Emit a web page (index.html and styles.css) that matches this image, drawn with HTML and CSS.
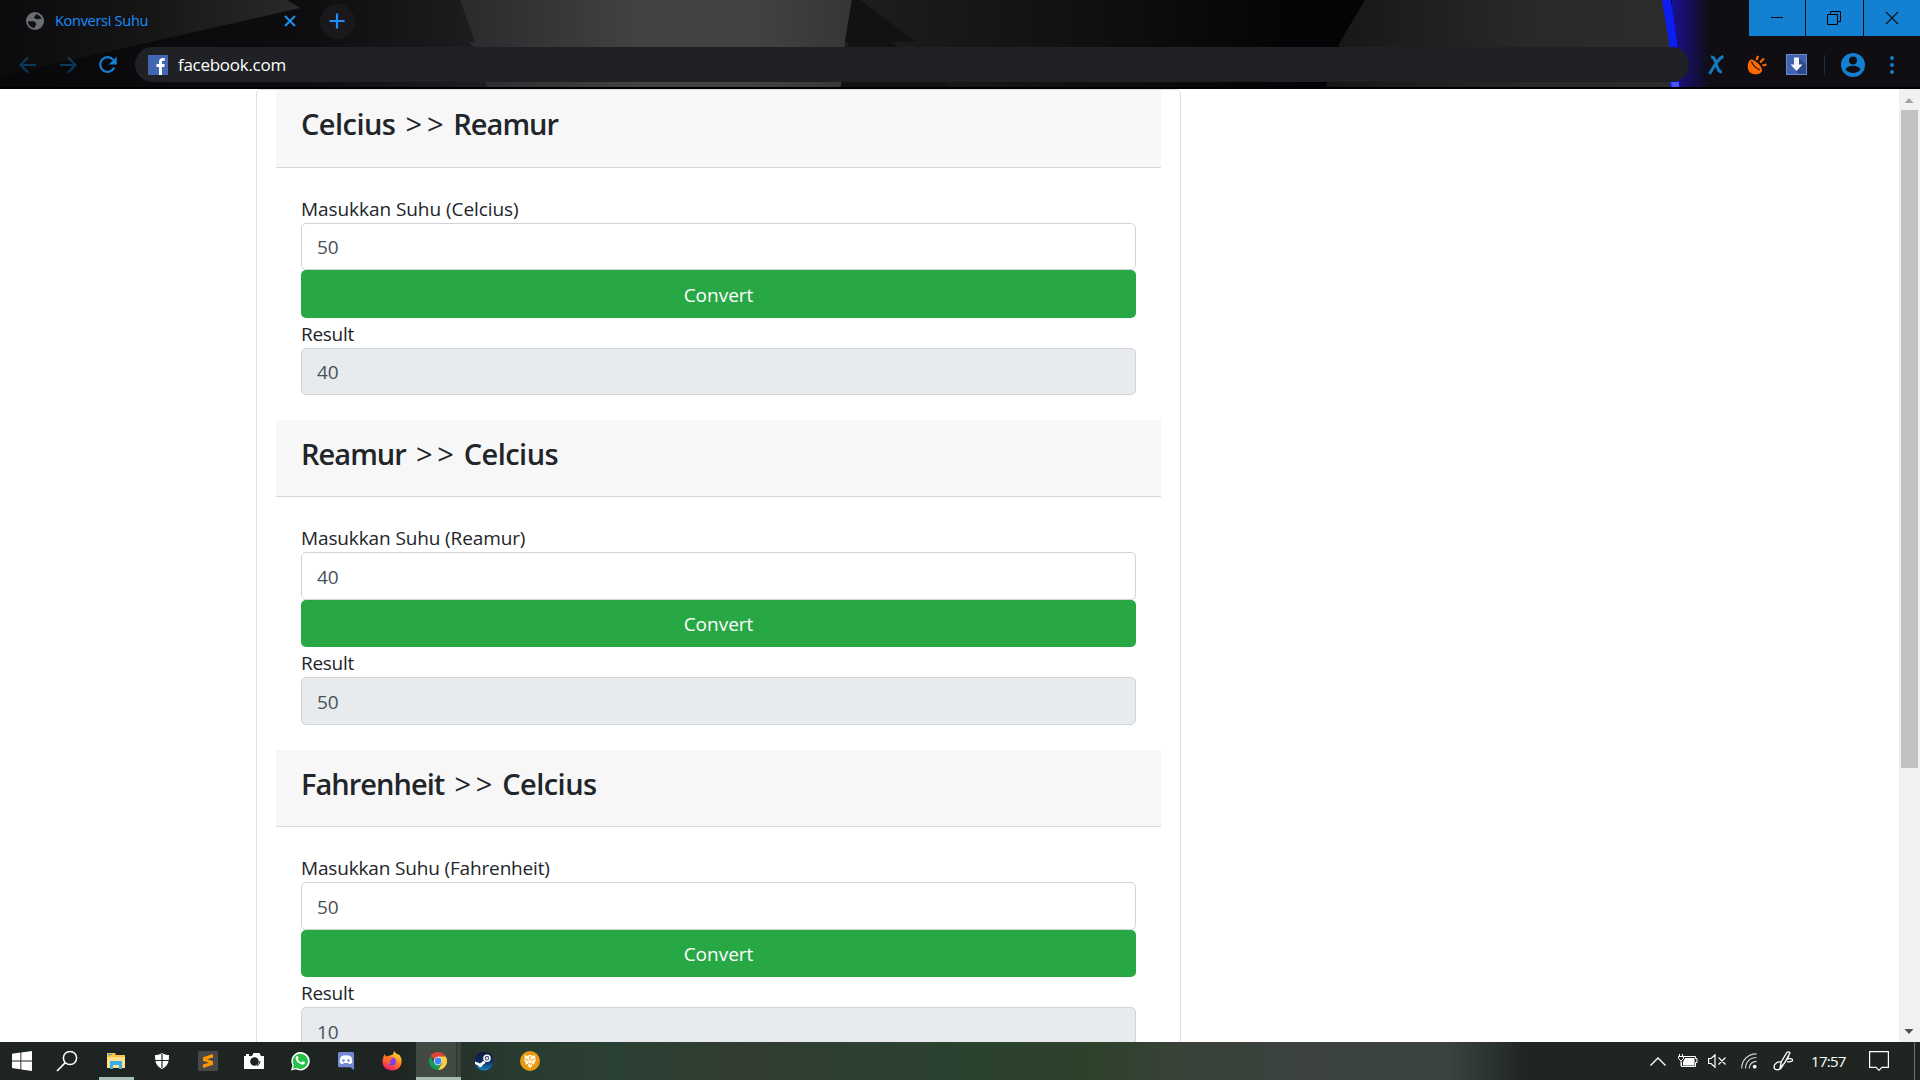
FILE: index.html
```html
<!DOCTYPE html>
<html lang="id">
<head>
<meta charset="utf-8">
<title>Konversi Suhu</title>
<link rel="stylesheet" href="styles.css">
</head>
<body>
<div class="screen">
  <header class="chrome">
    <svg class="theme" width="1920" height="87" viewBox="0 0 1920 87">
      <defs>
        <linearGradient id="g1" x1="0" x2="1"><stop offset="0" stop-color="#0b0b0d"/><stop offset=".5" stop-color="#161617"/><stop offset="1" stop-color="#2a2a2a"/></linearGradient>
        <linearGradient id="g2" x1="0" x2="1"><stop offset="0" stop-color="#2c292c"/><stop offset=".45" stop-color="#424242"/><stop offset=".75" stop-color="#424242"/><stop offset="1" stop-color="#363636"/></linearGradient>
        <linearGradient id="g3" x1="0" x2="1"><stop offset="0" stop-color="#1e1e1e"/><stop offset="1" stop-color="#040406"/></linearGradient>
        <linearGradient id="g4" x1="0" x2="1"><stop offset="0" stop-color="#161616"/><stop offset=".6" stop-color="#292929"/><stop offset="1" stop-color="#2c2c2c"/></linearGradient>
        <linearGradient id="g5" x1="0" x2="1"><stop offset="0" stop-color="#1a0f92"/><stop offset="1" stop-color="#100e12"/></linearGradient>
        <linearGradient id="g6" x1="0" x2="1"><stop offset="0" stop-color="#08080a"/><stop offset=".6" stop-color="#0d0c0f"/><stop offset="1" stop-color="#201e21"/></linearGradient>
      </defs>
      <rect width="1920" height="87" fill="#040306"/>
      <rect width="500" height="87" fill="url(#g6)"/>
      <path d="M0 0H287L300 8L0 76z" fill="url(#g1)"/>
      <path d="M460 0H852L845 42H475zM468 42H849V47H474zM485 82H842L841 87H487z" fill="url(#g2)"/>
      <path d="M852 0H1300V87H841L845 42z" fill="url(#g3)"/>
      <path d="M852 0H860L916 42H845zM849 42H892L898 47H848zM842 82H943L948 87H841z" fill="#121212"/>
      <path d="M1365 0H1663L1670 42V87H1326L1340 42z" fill="url(#g4)"/>
      <rect x="1672" width="38" height="87" fill="url(#g5)"/>
      <rect x="1710" width="210" height="87" fill="#100e12"/>
      <path d="M1662 0H1671L1677 42L1679 87H1670L1669 42z" fill="#0c1df2"/>
      <path d="M1671 82H1679V87H1672z" fill="#4455ff"/>
    </svg>
    <div class="tabs">
      <div class="tab">
        <svg width="18" height="18" viewBox="0 0 18 18"><circle cx="9" cy="9" r="9" fill="#6b6f74"/><path d="M2 9.200h5.500c1.600 0 1.500 1.600 2.600 2v2.200c-1 .3-1.400 1.200-1.400 2.600C5 15.800 2 13 2 9.200zM9.700 2.200c3 .3 5 2 6 4.500h-2.500c-1 1-2.800.8-3.800-.2-1.400.2-1.900-1-1.100-1.700.8-.8 1.400-1.400 1.400-2.600z" fill="#101114"/></svg>
        <span class="tab-title">Konversi Suhu</span>
        <svg class="tab-close" width="12" height="12" viewBox="0 0 12 12"><path d="M1 1l10 10M11 1L1 11" stroke="#1a91ea" stroke-width="2"/></svg>
      </div>
      <div class="newtab"><svg width="16" height="16" viewBox="0 0 16 16"><path d="M8 .5v15M.5 8h15" stroke="#1a91ff" stroke-width="2.200"/></svg></div>
      <div class="winbtns">
        <span class="win"><svg width="14" height="14" viewBox="0 0 14 14"><path d="M1 6.500h12" stroke="#000"/></svg></span>
        <span class="win"><svg width="14" height="14" viewBox="0 0 14 14"><path d="M.5 3.500h10v10h-10zM3.500 3.500v-3h10v10h-3" fill="none" stroke="#000"/></svg></span>
        <span class="win"><svg width="14" height="14" viewBox="0 0 14 14"><path d="M1 1l12 12M13 1L1 13" stroke="#081018" stroke-width="1.100"/></svg></span>
      </div>
    </div>
    <div class="toolbar">
      <svg class="nav" width="18" height="18" viewBox="0 0 18 18"><path d="M17 9H2M9 1.500L1.500 9 9 16.500" fill="none" stroke="#0c3a5e" stroke-width="2"/></svg>
      <svg class="nav" width="18" height="18" viewBox="0 0 18 18"><path d="M1 9h15M9 1.500L16.500 9 9 16.500" fill="none" stroke="#0c3a5e" stroke-width="2"/></svg>
      <svg class="nav" width="18" height="18" viewBox="0 0 18 18"><path d="M15.200 11.500A7.300 7.300 0 1 1 14.300 4" fill="none" stroke="#1380d2" stroke-width="2.200"/><path d="M17.700.5v8h-8z" fill="#1380d2"/></svg>
      <div class="omnibox">
        <svg width="20" height="20" viewBox="0 0 20 20"><rect width="20" height="20" fill="#4267b2"/><path d="M11 20v-8H8.500V9H11V7c0-3 1.700-4 3.800-4 1 0 1.700.1 2 .2v2.600h-1.400c-1.200 0-1.500.6-1.500 1.500V9h2.800l-.4 3h-2.400v8z" fill="#fff"/></svg>
        <span class="url">facebook.com</span>
      </div>
      <div class="exts">
        <svg width="18" height="20" viewBox="0 0 18 20"><path d="M4 2C8 1.500 8 6 9.500 10s2 7 5.500 7M16.500 1.500C11.500 3 7 11 2.500 19" fill="none" stroke="#1278b8" stroke-width="3"/></svg>
        <svg width="20" height="20" viewBox="0 0 20 20"><path d="M3.500 4.500C-1 9 0 18 6 19c5 1 8.500-.5 9-3.500z" fill="#ff6a00"/><path d="M3.500 4.500c3.500-1 12 6.500 11.500 11C11 16.500 3 9 3.500 4.500z" fill="#ff6a00"/><path d="M4.500 6.500c1 3.500 5 7.500 8.500 8.500" fill="none" stroke="#2b150a" stroke-width="1.200"/><path d="M9.500 5L11 .8M13 7.500L17 3.500M15.500 10.500l4-1" stroke="#ff6a00" stroke-width="2.200"/></svg>
        <svg width="21" height="21" viewBox="0 0 21 21"><rect x=".5" y=".5" width="20" height="20" fill="#3f63b0" stroke="#6c89c8"/><path d="M13 4l7 7v9h-7l-3-3z" fill="#2c4b8c"/><path d="M8 3.500h5v7h3.500l-6 6.500-6-6.500H8z" fill="#f3f3f3"/></svg>
        <i class="sep"></i>
        <svg width="24" height="24" viewBox="0 0 24 24"><circle cx="12" cy="12" r="12" fill="#1380d2"/><circle cx="12" cy="7.500" r="4" fill="#100e12"/><path d="M4.500 16.500c1.800-5 13.200-5 15 0-3 4.500-12 4.500-15 0z" fill="#100e12"/></svg>
        <svg class="dots" width="4" height="18" viewBox="0 0 4 18"><g fill="#1380d2"><circle cx="2" cy="2" r="1.900"/><circle cx="2" cy="9" r="1.900"/><circle cx="2" cy="16" r="1.900"/></g></svg>
      </div>
    </div>
  </header>
  <main class="viewport">
    <div class="card">
      <section class="first">
        <div class="card-header"><h4><span class="cel">Celcius</span> <span class="arrow">&gt;&gt;</span> <span class="rea">Reamur</span></h4></div>
        <div class="card-body">
          <label class="l-c">Masukkan Suhu (Celcius)</label>
          <div class="control">50</div>
          <div class="btn">Convert</div>
          <label class="l-res">Result</label>
          <div class="control readonly">40</div>
        </div>
      </section>
      <section>
        <div class="card-header"><h4><span class="rea">Reamur</span> <span class="arrow">&gt;&gt;</span> <span class="cel">Celcius</span></h4></div>
        <div class="card-body">
          <label class="l-r">Masukkan Suhu (Reamur)</label>
          <div class="control">40</div>
          <div class="btn">Convert</div>
          <label class="l-res">Result</label>
          <div class="control readonly">50</div>
        </div>
      </section>
      <section>
        <div class="card-header"><h4><span class="fah">Fahrenheit</span> <span class="arrow">&gt;&gt;</span> <span class="cel">Celcius</span></h4></div>
        <div class="card-body">
          <label class="l-f">Masukkan Suhu (Fahrenheit)</label>
          <div class="control">50</div>
          <div class="btn">Convert</div>
          <label class="l-res">Result</label>
          <div class="control readonly">10</div>
        </div>
      </section>
    </div>
    <div class="scrollbar">
      <svg width="21" height="21" viewBox="0 0 21 21"><path d="M5.500 14h9l-4.500-5z" fill="#a3a3a3"/></svg>
      <div class="thumb"></div>
      <svg class="down" width="21" height="21" viewBox="0 0 21 21"><path d="M5.500 8h9l-4.500 5z" fill="#505050"/></svg>
    </div>
  </main>
  <footer class="taskbar">
    <span class="task start"><svg width="20" height="20" viewBox="0 0 20 20"><path d="M0 2.800l8.400-1.200v7.900H0zM9.300 1.400L20 0v9.500H9.300zM0 10.400h8.400v7.900L0 17.100zM9.300 10.400H20V20L9.300 18.500z" fill="#fff"/></svg></span>
    <span class="task search"><svg width="22" height="22" viewBox="0 0 22 22"><circle cx="14" cy="8" r="6.600" fill="none" stroke="#fff" stroke-width="1.500"/><path d="M9.300 12.700L1 21" stroke="#fff" stroke-width="1.700"/></svg></span>
    <span class="task open"><svg width="18" height="16" viewBox="0 0 18 16"><path d="M0 0h8l1 2h9v13H0z" fill="#f5c542"/><path d="M0 4h18v11H0z" fill="#ffe08a"/><path d="M1 1h4v1H1z" fill="#2ba6de"/><path d="M3 16V8h12v8h-3v-4H6v4z" fill="#3aaee8"/></svg></span>
    <span class="task"><svg width="16" height="16" viewBox="0 0 16 16"><path d="M8 0c2 1.500 4.500 2 7 2 0 7-1 11-7 14C2 13 1 9 1 2c2.500 0 5-.5 7-2z" fill="#fff"/><path d="M8 1v14M1 7.500h14" stroke="#1e2421" stroke-width="1.200"/></svg></span>
    <span class="task"><svg width="20" height="20" viewBox="0 0 20 20"><rect width="20" height="20" rx="1.500" fill="#484848"/><path d="M15 3v3.500L9 8.300l6 2v3.500L5 17v-3.500l6-1.800-6-2V6.200z" fill="#ff9800"/></svg></span>
    <span class="task"><svg width="20" height="16" viewBox="0 0 20 16"><path d="M0 3h2V1h3v2h3l1.500-3h6L17 3h3v13H0z" fill="#fff"/><circle cx="10.500" cy="8.500" r="4.300" fill="#1e2421"/><path d="M13 13a5.500 5.500 0 0 0 3-5" fill="none" stroke="#1e2421"/></svg></span>
    <span class="task"><svg width="20" height="20" viewBox="0 0 20 20"><path d="M1 19.500l1.400-5A9.200 9.200 0 1 1 6 18.200z" fill="#fff"/><path d="M2.800 17.700l1-3.600a7.600 7.600 0 1 1 2.600 2.700z" fill="#25c149"/><path d="M6.500 5.200c1-.7 1.600-.2 2 1.500.3.800-1 1-.6 1.700 1 1.600 2 2.500 3.600 3 .6.200 1-1.300 1.600-1.100 1.400.6 2.100.9 1.700 2-1 2.200-4 1.300-6-.2C6.500 10.500 4.500 7.500 6.500 5.200z" fill="#fff"/></svg></span>
    <span class="task"><svg width="16" height="18" viewBox="0 0 16 18"><path d="M1.500 0h13Q16 0 16 1.500V18l-3.500-2.800H1.500Q0 15.200 0 13.700V1.500Q0 0 1.500 0z" fill="#7289da"/><path d="M3 4.500c3-1.600 7-1.600 10 0 1 2 1.500 4.500 1.200 6.300-1 1-2.200 1.300-3.200 1.200l-.7-1H5.700L5 12c-1 .1-2.200-.2-3.200-1.200C1.500 9 2 6.500 3 4.500z" fill="#fff"/><circle cx="5.500" cy="8.500" r="1.300" fill="#7289da"/><circle cx="10.500" cy="8.500" r="1.300" fill="#7289da"/></svg></span>
    <span class="task"><svg width="20" height="20" viewBox="0 0 20 20"><defs><linearGradient id="ff" x1=".8" y1="0" x2=".3" y2="1"><stop offset="0" stop-color="#ffe93b"/><stop offset=".45" stop-color="#ff8a1c"/><stop offset="1" stop-color="#f5156c"/></linearGradient></defs><path d="M12 0c1 2 3 2.500 4 4l.5-1C19 5.500 20 8 19.500 11.500 19 16.500 15 19.500 10 19.500S0 16 .5 10C.6 7 1.500 5 3 3l.7 2.500L6.500 5 11 3.500z" fill="url(#ff)"/><circle cx="10" cy="10.500" r="4" fill="#7a3ff0"/><path d="M4 6c2-1 4-.5 5 1.200L11 8 8 9.500c-1 1.500.5 3 2 3-3 1.500-6-1-6-4z" fill="#ff6b20"/></svg></span>
    <span class="task active"><svg width="18" height="18" viewBox="0 0 18 18"><path d="M9 9L1.200 4.500A9 9 0 0 1 16.800 4.500L9 4.800z" fill="#db4437"/><path d="M9 9V4.500h7.800A9 9 0 0 1 9 18l3.800-7z" fill="#ffcd40"/><path d="M1.200 4.500A9 9 0 0 0 9 18l3.900-6.800L9 9 5.200 11.200z" fill="#0f9d58"/><circle cx="9" cy="9" r="4.200" fill="#f1f1f1"/><circle cx="9" cy="9" r="3.400" fill="#4285f4"/></svg></span>
    <span class="task"><svg width="20" height="20" viewBox="0 0 20 20"><defs><linearGradient id="st" x2="0" y2="1"><stop offset="0" stop-color="#101a3c"/><stop offset=".5" stop-color="#0c2a5c"/><stop offset="1" stop-color="#1387c8"/></linearGradient></defs><circle cx="10" cy="10" r="9.500" fill="url(#st)"/><path d="M1 10.500l5 2 4-3 1.500 2.500-3 2c-.3 2.500-3.500 3-4.300.5L1 13z" fill="#fff"/><circle cx="13" cy="7.300" r="3" fill="#0c2350" stroke="#fff" stroke-width="1.500"/><circle cx="13" cy="7.300" r="1.500" fill="#ddd"/></svg></span>
    <span class="task"><svg width="20" height="20" viewBox="0 0 20 20"><circle cx="10" cy="10" r="10" fill="#e89a12"/><path d="M5 4l2.500 1L10 3.500 12.500 5 15 4l.7 5-1.500 4L10 17l-4.200-4-1.500-4z" fill="#fff3dc"/><path d="M5.500 8l3.200 1.500M14.500 8l-3.200 1.500M8 12l2 1.500 2-1.500M10 5v4M7.500 13v2M12.500 13v2" stroke="#e89a12" fill="none"/></svg></span>
    <div class="tray">
      <svg class="t-chev" width="16" height="9" viewBox="0 0 16 9"><path d="M.5 8.500L8 1l7.500 7.500" fill="none" stroke="#fff" stroke-width="1.300"/></svg>
      <svg class="t-bat" width="20" height="14" viewBox="0 0 20 14"><path d="M5.500 2.500h12v2H19v4h-1.500v4h-14v-4" fill="none" stroke="#fff"/><path d="M7 4h9.500v7.500H5V8z" fill="#fff"/><path d="M1.500 0v3M4.500 0v3M.5 2.500h5v2L3.500 6.500h-1L.5 4.500zM3 6v6" stroke="#fff" fill="none"/></svg>
      <svg class="t-vol" width="18" height="14" viewBox="0 0 18 14"><path d="M.6 4.500h2.500L7 .8v12.400L3.100 9.500H.6zM10.500 3.500l7 7M17.500 3.500l-7 7" fill="none" stroke="#fff" stroke-width="1.200"/></svg>
      <svg class="t-wifi" width="16" height="16" viewBox="0 0 16 16"><g fill="none" stroke="#cfd2d0" stroke-width="1.200"><path d="M.7 15.500C.7 7 7 .8 15.500.8M4.500 15.500c0-6.500 4.500-11 11-11M8.300 15.500c0-4.500 3-7.200 7.200-7.200"/></g><circle cx="13.700" cy="13.700" r="1.900" fill="#fff"/></svg>
      <svg class="t-pen" width="20" height="20" viewBox="0 0 20 20"><path d="M7 17L8.200 11 14 1.200q1.500-1 3 .7L11.500 12zM13.500 8.500c3-1.500 6-1 6 .7s-3 1.800-5.500 1.500M8 11c-4-.5-7 2-7 5s5 4 7.500.5L16 5" fill="none" stroke="#fff" stroke-width="1.300"/></svg>
      <span class="clock">17:57</span>
      <svg class="t-act" width="20" height="20" viewBox="0 0 20 20"><path d="M.6.6h18.800v15.800h-6.500L10 19.300 7.100 16.400H.6z" fill="none" stroke="#fff" stroke-width="1.200"/></svg>
      <i class="desk"></i>
    </div>
  </footer>
</div>
</body>
</html>
```
FILE: styles.css
```css
* { box-sizing: border-box; }
body { margin: 0; overflow: hidden; font-family: "Open Sans", "Noto Sans", sans-serif; background: #fff; }
svg { display: block; flex: none; }
.screen { width: 1920px; height: 1080px; display: flex; flex-direction: column; overflow: hidden; }

.chrome { position: relative; height: 89px; flex: none; background: #000; }
.theme { position: absolute; left: 0; top: 0; }
.tabs, .toolbar { position: relative; display: flex; }
.tabs { height: 42px; }
.tab { width: 310px; height: 42px; display: flex; align-items: center; padding: 0 14px 0 26px; }
.tab-title { margin-left: 11px; font-size: 14.5px; line-height: 20px; letter-spacing: -.28px; color: #1a8cff; flex: 1; white-space: nowrap; }
.newtab { width: 35px; height: 35px; margin: 4px 0 0 10px; border-radius: 50%; background: #19191b; display: flex; align-items: center; justify-content: center; }
.newtab svg { margin: 0 1px 1px 0; }
.winbtns { margin-left: auto; height: 36px; display: flex; gap: 1px; }
.win { width: 56px; padding: 0 1px 0 0; background: #1380d2; display: flex; align-items: center; justify-content: center; }
.win:nth-child(2) { width: 57px; padding-right: 2px; }
.toolbar { height: 45px; align-items: center; padding-left: 19px; }
.nav { margin-right: 22px; }
.omnibox { width: 1554px; height: 35px; margin-left: -4px; border-radius: 18px; background: #202124; display: flex; align-items: center; padding-left: 13px; }
.url { margin-left: 10px; font-size: 17px; line-height: 24px; letter-spacing: -.28px; color: #fff; }
.exts { display: flex; align-items: center; margin-left: 18px; }
.exts svg:nth-of-type(2) { margin-left: 22px; }
.exts svg:nth-of-type(3) { margin-left: 19px; }
.sep { width: 1px; height: 20px; margin: 0 16px 0 17px; background: #15304a; }
.exts .dots { margin-left: 25px; }

.viewport { height: 953px; flex: none; display: flex; overflow: hidden; background: #fff; }
.card { width: 925px; height: 1300px; margin-left: 256px; padding: 0 19px; border: 1px solid #dfdfdf; border-radius: 5px; flex: none; }
.card-header { height: 77px; padding: 16px 25px 0; background: #f7f7f7; border-bottom: 1px solid #d8d8d8; }
.first .card-header { height: 78px; border-radius: 4px 4px 0 0; }
.card-header h4 { margin: 0; font-size: 29px; line-height: 36px; font-weight: 600; color: #212529; white-space: pre; }
.cel { letter-spacing: -.55px; }
.rea, .fah { letter-spacing: -.97px; }
.arrow { letter-spacing: 4.900px; margin: 0 -2.700px 0 2.500px; font-weight: 500; }
.card-body { padding: 25px; display: flex; flex-direction: column; font-size: 19px; color: #212529; }
.card-body label { height: 30px; line-height: 32px; white-space: nowrap; align-self: flex-start; }
.l-c { letter-spacing: -.06px; }
.l-r { letter-spacing: -.12px; }
.l-f { letter-spacing: -.16px; }
.l-res { letter-spacing: -.3px; }
.control { height: 48px; padding: 0 15px; border: 1px solid #ced4da; border-radius: 5px; line-height: 48px; color: #495057; }
.first .control { height: 47px; line-height: 46px; }
.readonly { background: #e7ebee; }
.btn { height: 47px; border-radius: 5px; background: #28a745; color: #fff; text-align: center; line-height: 49px; }
.first .btn { height: 48px; line-height: 50px; }
.scrollbar { width: 21px; height: 953px; margin-left: auto; background: #f1f1f1; display: flex; flex-direction: column; }
.thumb { width: 17px; height: 658px; margin-left: 2px; background: #c1c1c1; }
.scrollbar .down { margin-top: auto; }

.taskbar { height: 38px; flex: none; display: flex; background: linear-gradient(90deg, #1e2421 0, #1e2421 390px, #283a2f 500px, #2b4034 620px, #313d30 740px, #2d4032 860px, #2b422f 970px, #2d422b 1090px, #394238 1180px, #3b4240 1300px, #3a4240 1450px, #1f2622 1525px); }
.task { width: 46px; height: 38px; display: flex; align-items: center; justify-content: center; }
.start { width: 44px; }
.search { margin-right: 3px; }
.open { background: linear-gradient(#a6bfb2, #a6bfb2) 6px 35px / 35px 3px no-repeat; }
.active { background: linear-gradient(#a6bfb2, #a6bfb2) 1px 35px / 45px 3px no-repeat, linear-gradient(90deg, transparent 1px, #414b44 1px, #414b44 41px, #2c3830 41px, #2c3830 42px, #39463d 42px); }
.tray { margin-left: auto; display: flex; align-items: center; color: #fff; }
.t-bat { margin-left: 12px; }
.t-vol { margin-left: 10px; }
.t-wifi { margin-left: 15px; }
.t-pen { margin-left: 16px; }
.clock { width: 34px; margin-left: 18px; margin-right: 1px; font-size: 15px; letter-spacing: -.7px; white-space: nowrap; }
.t-act { margin-left: 23px; }
.desk { width: 1px; height: 38px; margin: 0 5px 0 25px; background: #6d726f; }
```
